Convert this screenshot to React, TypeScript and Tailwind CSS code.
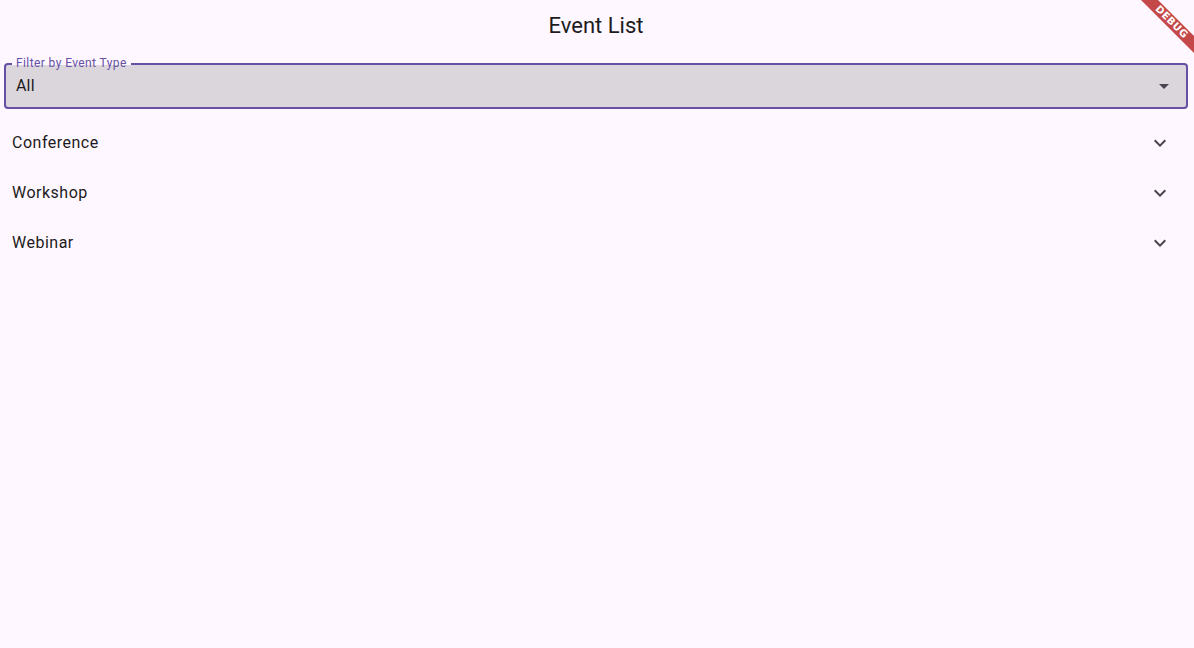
const rows = ['Conference', 'Workshop', 'Webinar'];

function ExpandMore() {
  return (
    <svg width="24" height="24" viewBox="0 0 24 24" className="fill-[#49454f]">
      <path d="M16.59 8.59L12 13.17 7.41 8.59 6 10l6 6 6-6z" />
    </svg>
  );
}

function ArrowDropDown() {
  return (
    <svg width="24" height="24" viewBox="0 0 24 24" className="fill-[#49454f]">
      <path d="M7 10l5 5 5-5z" />
    </svg>
  );
}

export default function App() {
  return (
    <div className="relative w-[1194px] h-[648px] overflow-hidden bg-[#fef7ff] text-[#1d1b20] font-['Roboto',sans-serif]">
      <header className="h-[50px] flex items-center justify-center pr-[2px] text-[22px]">Event List</header>

      <div className="px-[4px] pt-[13px]">
        <div className="relative h-[46px] mr-[2px] flex items-center border-2 border-[#6750a4] rounded-[4px] bg-[#dbd5dc] pl-[10px] pr-[10px]">
          <span className="absolute -top-[2px] left-[6px] w-[119px] h-[2px] bg-[#fef7ff]" />
          <span className="absolute -top-[10px] left-[10px] text-[12px] leading-[16px] tracking-[0.4px] text-[#6750a4]">Filter by Event Type</span>
          <span className="flex-1 text-[16px] tracking-[0.15px]">All</span>
          <ArrowDropDown />
        </div>

        <div className="mt-[9px]">
          {rows.map((r) => (
            <div key={r} className="h-[50px] flex items-center justify-between pl-[8px] pr-[18px]">
              <span className="text-[16px] tracking-[0.5px]">{r}</span>
              <ExpandMore />
            </div>
          ))}
        </div>
      </div>

      <div className="absolute top-[16px] -right-[26px] w-[97px] h-[12px] rotate-45 bg-[#b71c1c]/[0.8] flex items-center justify-center text-white text-[10px] leading-none font-black tracking-[0.5px] font-['DejaVu_Sans',sans-serif]">
        DEBUG
      </div>
    </div>
  );
}
